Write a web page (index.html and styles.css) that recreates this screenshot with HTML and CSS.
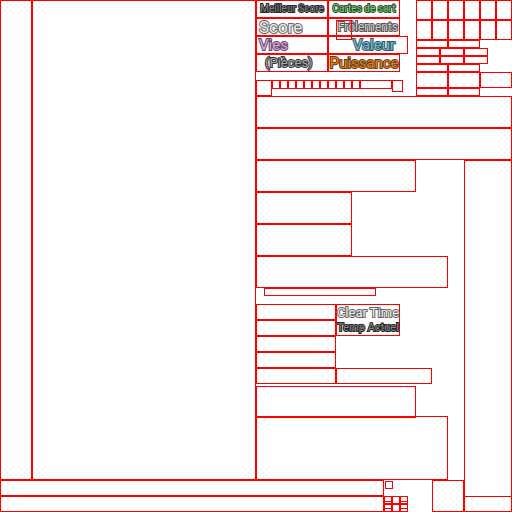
FILE: index.html
```html
<!DOCTYPE html>
<html lang="fr">
<head>
<meta charset="utf-8">
<title>Atlas</title>
<link rel="stylesheet" href="styles.css">
</head>
<body>
<main class="atlas">
  <div class="box strip"></div>
  <div class="box panel"></div>

  <section class="head">
    <div class="head-top">
      <div class="labels">
        <div class="row r18"><div class="box w72 label small dark">Meilleur Score</div><div class="box w72 label small green">Cartes de sort</div></div>
        <div class="row r18"><div class="box w72 label big start silver">Score</div><div class="box w72 label roomy end gray">Frôlements<span class="box marker"></span></div></div>
        <div class="row r18"><div class="box w72 label mid start pink">Vies</div><div class="box w80 label mid end blue">Valeur</div></div>
        <div class="row r18"><div class="box w72 label medium start indent dim">(Pièces)</div><div class="box w72 label mid orange">Puissance</div></div>
        <div class="row digits">
          <div class="box w16 r16"></div>
          <div class="box w8 r9"></div><div class="box w8 r9"></div><div class="box w8 r9"></div><div class="box w8 r9"></div><div class="box w8 r9"></div><div class="box w8 r9"></div><div class="box w8 r9"></div><div class="box w8 r9"></div><div class="box w8 r9"></div><div class="box w8 r9"></div><div class="box w8 r9"></div>
          <div class="box w32 r9"></div>
          <div class="box w11 r12"></div>
        </div>
      </div>
      <div class="tiles">
        <div class="row r20"><div class="box w16"></div><div class="box w16"></div><div class="box w16"></div><div class="box w16"></div><div class="box w16"></div><div class="box w16"></div></div>
        <div class="row r20"><div class="box w16"></div><div class="box w16"></div><div class="box w16"></div><div class="box w16"></div><div class="box w16"></div><div class="box w16"></div></div>
        <div class="row r8"><div class="box w32"></div><div class="box w32"></div></div>
        <div class="row r8"><div class="box w24"></div><div class="box w24"></div><div class="box w24"></div></div>
        <div class="row r8"><div class="box w24"></div><div class="box w24"></div><div class="box w24"></div></div>
        <div class="row r8"><div class="box w32"></div><div class="box w32"></div></div>
        <div class="row r16"><div class="box w32"></div><div class="box w32"></div><div class="box w32"></div></div>
        <div class="row r8"><div class="box w32"></div><div class="box w32"></div></div>
      </div>
    </div>
    <div class="box r32"></div>
    <div class="box r32"></div>
  </section>

  <section class="body">
    <div class="box w160 r32"></div>
    <div class="box w96 r32"></div>
    <div class="box w96 r32"></div>
    <div class="box w192 r32"></div>
    <div class="box w112 r8 inset"></div>
    <div class="row times">
      <div>
        <div class="box w80 r16"></div><div class="box w80 r16"></div><div class="box w80 r16"></div><div class="box w80 r16"></div><div class="box w80 r16"></div>
      </div>
      <div class="times-side">
        <div class="box w64 r32 pair"><span class="label medium silver">Clear Time</span><span class="label compact dark">Temp Actuel</span></div>
        <div class="box w96 r16"></div>
      </div>
    </div>
    <div class="box w160 r32 raised"></div>
    <div class="box w192 rest"></div>
  </section>

  <div class="box side"><div class="side-foot"></div></div>

  <footer class="foot">
    <div class="bars"><div class="box r16"></div><div class="box r16"></div></div>
    <div class="icons">
      <div class="box w8 r8 dot"></div>
      <div class="row r8"><div class="box w8 split-low"></div><div class="box w8"></div><div class="box w8 split-low"></div></div>
      <div class="row r8"><div class="box w8 split-high"></div><div class="box w8"></div><div class="box w8 split-high"></div></div>
    </div>
    <div class="box w32 r32"></div>
  </footer>
</main>
</body>
</html>
```
FILE: styles.css
```css
* { box-sizing: border-box; }

body {
  margin: 0;
  background: #fff;
  font-family: "Liberation Sans", sans-serif;
}

.atlas {
  display: grid;
  grid-template-columns: 32px 224px 1fr 48px;
  grid-template-rows: auto 1fr auto;
  min-height: 100vh;
}

.box { border: 1px solid #f00; flex: none; }
.row { display: flex; }

.w8 { width: 8px; }
.w11 { width: 11px; }
.w16 { width: 16px; }
.w24 { width: 24px; }
.w32 { width: 32px; }
.w64 { width: 64px; }
.w72 { width: 72px; }
.w80 { width: 80px; }
.w96 { width: 96px; }
.w112 { width: 112px; }
.w160 { width: 160px; }
.w192 { width: 192px; }

.r8 { height: 8px; }
.r9 { height: 9px; }
.r12 { height: 12px; }
.r16 { height: 16px; }
.r18 { height: 18px; }
.r20 { height: 20px; }
.r32 { height: 32px; }

.strip { grid-area: 1 / 1 / 3 / 2; }
.panel { grid-area: 1 / 2 / 3 / 3; }
.head { grid-area: 1 / 3 / 2 / 5; }
.body { grid-area: 2 / 3 / 3 / 4; display: flex; flex-direction: column; }
.side { grid-area: 2 / 4 / 4 / 5; display: flex; flex-direction: column; justify-content: flex-end; }
.foot { grid-area: 3 / 1 / 4 / 4; display: flex; }

.head-top { display: flex; justify-content: space-between; }
.tiles { width: 96px; }
.digits { margin-top: 8px; }

.label {
  display: flex;
  align-items: center;
  justify-content: center;
  font-family: Roboto, "Liberation Sans", sans-serif;
  font-weight: 400;
  line-height: 16px;
  white-space: nowrap;
  paint-order: stroke fill;
  -webkit-text-stroke: 2px #444;
}
.small { font-size: 10px; }
.compact { font-size: 11px; }
.roomy { font-size: 12px; }
.medium { font-size: 13px; }
.mid { font-size: 15px; }
.big { font-size: 17px; }
.start { justify-content: flex-start; padding-left: 2px; }
.end { justify-content: flex-end; padding-right: 1px; }
.indent { padding-left: 8px; }
.blue.end { padding-right: 12px; }

.dark { color: #888; -webkit-text-stroke-color: #222; }
.dim { color: #aaa; -webkit-text-stroke-color: #333; }
.gray { color: #ccc; -webkit-text-stroke-color: #555; position: relative; }
.silver { color: #eee; -webkit-text-stroke-color: #666; }
.green { color: #7cd07c; -webkit-text-stroke-color: #2c4a2c; }
.pink { color: #e0a8e0; -webkit-text-stroke-color: #5c465c; }
.blue { color: #68c0d8; -webkit-text-stroke-color: #35505a; }
.orange { color: #f07c08; -webkit-text-stroke-color: #5a3c1c; }

.marker { position: absolute; left: 7px; top: 1px; width: 16px; height: 20px; }

.inset { margin-left: 8px; }
.times { margin-top: 8px; }
.times-side { display: flex; flex-direction: column; justify-content: space-between; }
.pair .label { line-height: 15px; }
.raised { margin-top: 2px; }
.rest { flex: 1; margin-top: -2px; }

.side-foot { height: 15px; border-top: 1px solid #f00; }

.bars { flex: 1; }
.icons { width: 48px; }
.dot { margin: 1px 1px 7px; }
.split-low::before,
.split-high::before { content: ""; display: block; border-bottom: 1px solid #f00; }
.split-low::before { height: 4px; }
.split-high::before { height: 3px; }
```
